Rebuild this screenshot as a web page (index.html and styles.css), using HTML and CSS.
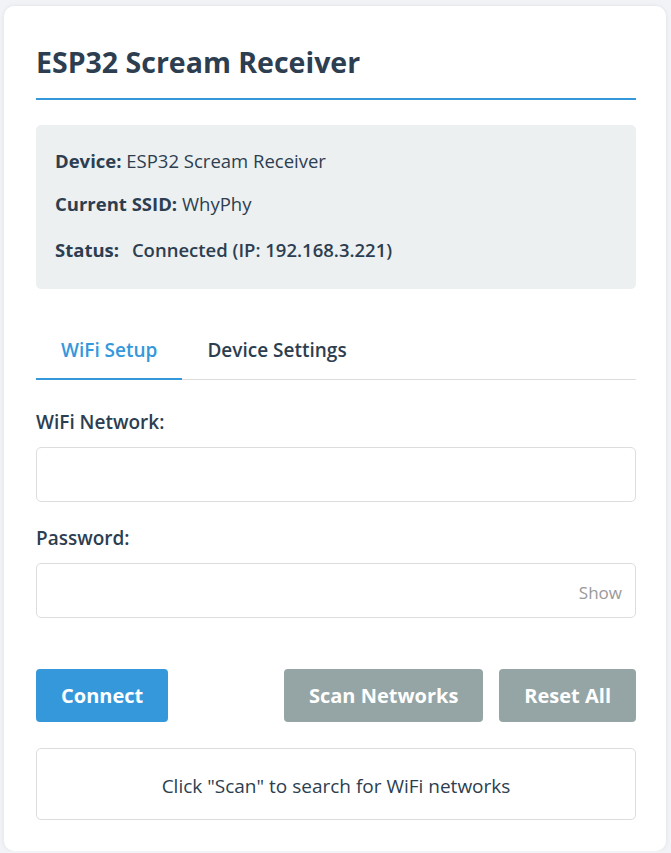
FILE: index.html
```html
<!DOCTYPE html>
<html lang="en">
<head>
<meta charset="utf-8">
<title>ESP32 Scream Receiver</title>
<link rel="stylesheet" href="styles.css">
</head>
<body>
<div class="card">
  <h1 class="title">ESP32 Scream Receiver</h1>

  <div class="info-box">
    <div class="info-row"><strong>Device:</strong> ESP32 Scream Receiver</div>
    <div class="info-row"><strong>Current SSID:</strong> WhyPhy</div>
    <div class="info-row"><strong>Status:</strong> <span class="status">Connected (IP: 192.168.3.221)</span></div>
  </div>

  <div class="tabs">
    <button class="tab active">WiFi Setup</button>
    <button class="tab">Device Settings</button>
  </div>

  <div class="form-group">
    <label class="label" for="ssid">WiFi Network:</label>
    <input class="input" id="ssid" type="text">
  </div>

  <div class="form-group">
    <label class="label" for="pass">Password:</label>
    <div class="pass-wrap">
      <input class="input" id="pass" type="password">
      <span class="show">Show</span>
    </div>
  </div>

  <div class="actions">
    <button class="btn btn-primary">Connect</button>
    <div class="spacer"></div>
    <button class="btn btn-gray">Scan Networks</button>
    <button class="btn btn-gray">Reset All</button>
  </div>

  <div class="scan-box">Click "Scan" to search for WiFi networks</div>
</div>
</body>
</html>
```
FILE: styles.css
```css
* { box-sizing: border-box; }
html, body { margin: 0; padding: 0; }
body {
  background: #f2f3f6;
  font-family: "Open Sans", "Noto Sans", sans-serif;
  color: #2c3e50;
  padding: 6px 5px 0 4px;
}
.card {
  background: #fff;
  border-radius: 10px;
  box-shadow: 0 0 4px rgba(0,0,0,0.08);
  padding: 31px 30px 31px 32px;
}
.title {
  margin: 0;
  font-size: 28.5px;
  font-weight: 700;
  line-height: 36px;
  padding: 7px 0 18px;
  border-bottom: 2px solid #3498db;
  color: #2c3e50;
}
.info-box {
  margin-top: 25px;
  background: #ecf0f1;
  border-radius: 5px;
  padding: 23px 19px 24px;
  display: flex;
  flex-direction: column;
  gap: 18px;
  font-size: 18.5px;
  line-height: 25px;
}
.info-row strong { font-weight: 700; }
.status {
  display: inline-block;
  padding: 3px 8px;
  font-weight: 600;
}
.tabs {
  margin-top: 39px;
  display: flex;
  border-bottom: 1px solid #ddd;
}
.tab {
  font-family: inherit;
  background: none;
  border: none;
  border-bottom: 2px solid transparent;
  margin-bottom: -1px;
  padding: 10px 25px 15px;
  font-size: 19px;
  line-height: 25px;
  font-weight: 600;
  color: #2c3e50;
}
.tab.active {
  color: #3498db;
  border-bottom-color: #3498db;
}
.form-group { margin-top: 30px; }
.form-group + .form-group { margin-top: 24px; }
.label {
  display: block;
  font-size: 19px;
  line-height: 25px;
  font-weight: 600;
  margin-bottom: 12px;
}
.input {
  display: block;
  width: 100%;
  height: 55px;
  border: 1px solid #ddd;
  border-radius: 5px;
  background: #fff;
  font-family: inherit;
  font-size: 16px;
  padding: 0 12px;
}
.pass-wrap { position: relative; }
.show {
  position: absolute;
  right: 14px;
  top: 19px;
  font-size: 17px;
  line-height: 22px;
  color: #999;
}
.actions {
  margin-top: 51px;
  display: flex;
  gap: 16px;
}
.spacer { flex: 1; }
.btn {
  font-family: "Open Sans", sans-serif;
  font-size: 20px;
  font-weight: 700;
  color: #fff;
  border: none;
  border-radius: 4px;
  height: 53px;
  padding: 0 25px;
}
.btn-primary { background: #3498db; }
.btn-gray { background: #95a5a6; }
.scan-box {
  margin-top: 26px;
  border: 1px solid #ddd;
  border-radius: 5px;
  height: 72px;
  display: flex;
  align-items: center;
  justify-content: center;
  padding-top: 3px;
  font-size: 19px;
  color: #2c3e50;
}
```
